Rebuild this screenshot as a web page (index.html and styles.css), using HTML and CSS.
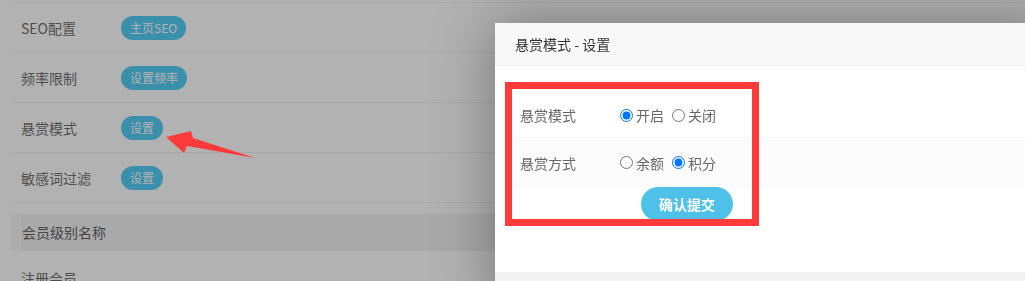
FILE: index.html
```html
<!DOCTYPE html>
<html lang="zh-CN">
<head>
  <meta charset="UTF-8">
  <title>系统设置</title>
  <link rel="stylesheet" href="styles.css">
</head>
<body>
  <div class="page">
    <div class="set-table">
      <div class="set-row">
        <div class="set-label">SEO配置</div>
        <span class="btn-info">主页SEO</span>
      </div>
      <div class="set-row">
        <div class="set-label">频率限制</div>
        <span class="btn-info">设置频率</span>
      </div>
      <div class="set-row">
        <div class="set-label">悬赏模式</div>
        <span class="btn-info">设置</span>
      </div>
      <div class="set-row">
        <div class="set-label">敏感词过滤</div>
        <span class="btn-info">设置</span>
      </div>
    </div>
    <div class="group-head">
      <span class="group-mark"></span>
      <div class="group-title">会员级别名称</div>
    </div>
    <div class="set-row plain">
      <div class="set-label">注册会员</div>
    </div>
  </div>

  <div class="shade"></div>

  <div class="modal">
    <div class="modal-head">悬赏模式 - 设置</div>
    <div class="modal-body">
      <div class="form-row first">
        <div class="form-label">悬赏模式</div>
        <label class="radio"><input type="radio" name="mode" checked>开启</label>
        <label class="radio"><input type="radio" name="mode">关闭</label>
      </div>
      <div class="form-row alt">
        <div class="form-label">悬赏方式</div>
        <label class="radio"><input type="radio" name="way">余额</label>
        <label class="radio"><input type="radio" name="way" checked>积分</label>
      </div>
      <div class="form-actions">
        <button class="submit">确认提交</button>
      </div>
    </div>
    <div class="modal-foot"></div>
    <div class="mark-box"></div>
  </div>

  <svg class="arrow" width="1025" height="281" viewBox="0 0 1025 281">
    <polygon points="166,137 191,131 193,138 255,158 187,146 184,153" fill="#fd3b3b"/>
  </svg>
</body>
</html>
```

FILE: styles.css
```css
body {
  margin: 0;
  font-family: "Noto Sans CJK SC", "Noto Sans", sans-serif;
  font-size: 14px;
  background: #fff;
  overflow: hidden;
  height: 281px;
}
.page {
  padding: 2px 0 0 11px;
}
.set-table {
  border-top: 1px solid #f0f0f0;
}
.set-row {
  display: flex;
  align-items: center;
  height: 49px;
  border-bottom: 1px solid #f0f0f0;
}
.set-row.plain {
  border-bottom: none;
  align-items: flex-start;
  padding-top: 17px;
}
.set-label {
  width: 100px;
  padding-left: 10px;
  color: #727272;
  line-height: 20px;
}
.btn-info {
  display: inline-block;
  height: 24px;
  line-height: 24px;
  padding: 0 9px;
  border-radius: 12px;
  background: #53cdf4;
  color: #fff;
  font-size: 12px;
}
.group-head {
  display: flex;
  margin-top: 11px;
  height: 37px;
}
.group-mark {
  width: 9px;
  background: #f7f7f7;
  margin-right: 1px;
}
.group-title {
  flex: 1;
  background: #f2f2f2;
  padding-left: 1px;
  line-height: 37px;
  color: #666;
}
.shade {
  position: fixed;
  inset: 0;
  background: rgba(0, 0, 0, 0.3);
}
.modal {
  position: absolute;
  left: 495px;
  top: 23px;
  width: 560px;
  background: #fff;
  box-shadow: 0 0 55px rgba(0, 0, 0, 0.35);
}
.modal-head {
  height: 42px;
  line-height: 42px;
  padding-left: 20px;
  background: #f8f8f8;
  border-bottom: 1px solid #eee;
  color: #333;
}
.modal-body {
  padding: 24px 0 51px 15px;
}
.form-row {
  display: flex;
  align-items: center;
  height: 47px;
  border-bottom: 1px solid #f2f2f2;
  color: #666;
}
.form-row.first {
  height: 44px;
  padding-top: 3px;
}
.form-row.alt {
  background: #fcfcfc;
  border-bottom: none;
  height: 49px;
}
.form-label {
  width: 97px;
  padding-left: 10px;
}
.radio {
  display: flex;
  align-items: center;
  margin-right: 5px;
}
.radio input {
  margin: 0 3px 0 3px;
  width: 13px;
  height: 13px;
}
.form-actions {
  padding-left: 131px;
}
.submit {
  width: 92px;
  height: 34px;
  border: none;
  border-radius: 17px;
  background: #4fc1e9;
  color: #fff;
  font-family: inherit;
  font-size: 14px;
  font-weight: bold;
}
.modal-foot {
  height: 40px;
  background: #f3f3f3;
}
.mark-box {
  position: absolute;
  left: 10px;
  top: 59px;
  width: 240px;
  height: 130px;
  border: 7px solid #fd3b3b;
}
.arrow {
  position: absolute;
  left: 0;
  top: 0;
  pointer-events: none;
}
```
